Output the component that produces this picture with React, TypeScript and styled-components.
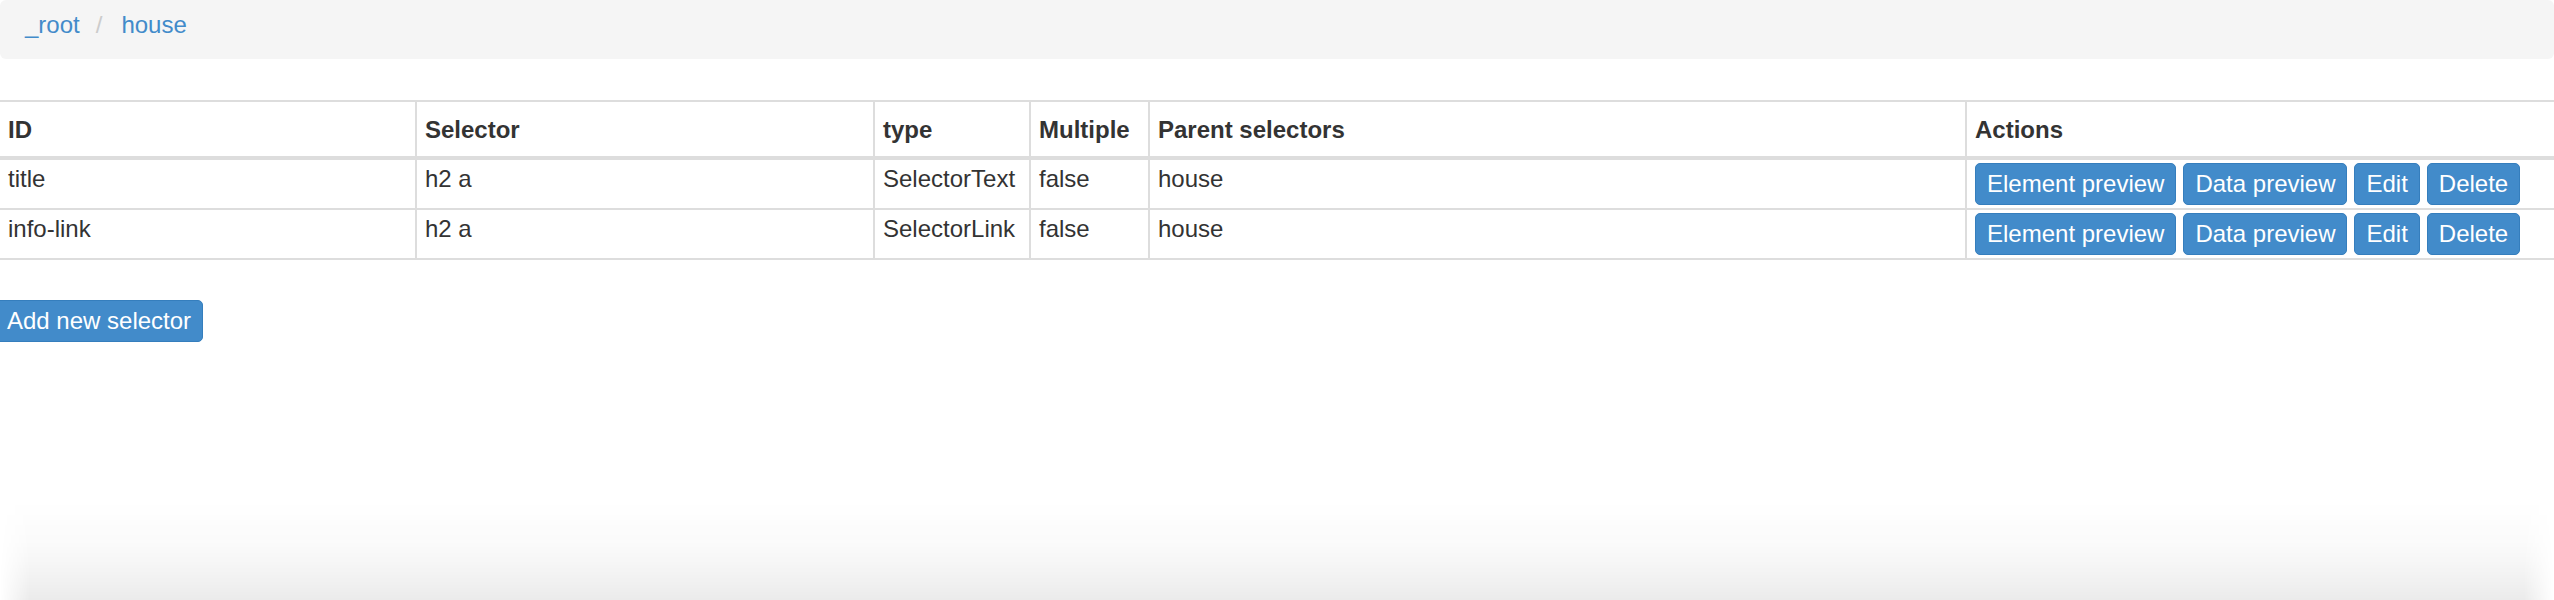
import React from "react";
import styled, { createGlobalStyle } from "styled-components";

const GlobalStyle = createGlobalStyle`
  html, body {
    margin: 0;
    padding: 0;
    background: #ffffff;
  }
  body {
    font-family: "Liberation Sans", Arial, Helvetica, sans-serif;
    font-size: 24px;
    line-height: 32px;
    color: #333333;
  }
  * { box-sizing: border-box; }
`;

const Page = styled.div`
  display: flex;
  flex-direction: column;
  height: 600px;
  overflow: hidden;
`;

const Breadcrumb = styled.ol`
  display: flex;
  align-items: baseline;
  list-style: none;
  margin: 0 0 41px;
  padding: 9px 25px 18px;
  height: 59px;
  background: #f5f5f5;
  border-radius: 6px;
  flex-shrink: 0;
`;

const Crumb = styled.li`
  display: flex;
  align-items: baseline;
`;

const CrumbLink = styled.a`
  color: #428bca;
  text-decoration: none;
`;

const Separator = styled.span`
  color: #cccccc;
  padding: 0 19px 0 16px;
`;

const Table = styled.table`
  width: 100%;
  table-layout: fixed;
  border-collapse: separate;
  border-spacing: 0;
  border-top: 2px solid #dddddd;
  margin: 0 0 40px;
  flex-shrink: 0;
`;

const HeadCell = styled.th<{ $w: number; $first?: boolean }>`
  width: ${(p) => p.$w}px;
  padding: 12px 8px 10px;
  text-align: left;
  vertical-align: top;
  font-weight: bold;
  line-height: 32px;
  border-bottom: 4px solid #dddddd;
  border-left: ${(p) => (p.$first ? "0" : "2px solid #dddddd")};
  white-space: nowrap;
  overflow: hidden;
`;

const Cell = styled.td<{ $first?: boolean }>`
  padding: 3px 8px;
  text-align: left;
  vertical-align: top;
  line-height: 32px;
  border-bottom: 2px solid #dddddd;
  border-left: ${(p) => (p.$first ? "0" : "2px solid #dddddd")};
  white-space: nowrap;
  overflow: hidden;
`;

const ButtonGroup = styled.div`
  display: flex;
  gap: 7px;
`;

const Button = styled.button<{ $bleed?: boolean }>`
  display: inline-flex;
  align-items: center;
  height: 42px;
  padding: 0 11px;
  margin-left: ${(p) => (p.$bleed ? "-5px" : "0")};
  border: 1px solid #357ebd;
  border-radius: 5px;
  background: #428bca;
  color: #ffffff;
  font-family: "Liberation Sans", Arial, Helvetica, sans-serif;
  font-size: 24px;
  line-height: normal;
  white-space: nowrap;
  cursor: pointer;
`;

const Footer = styled.div`
  display: flex;
  flex-shrink: 0;
`;

const Shade = styled.div`
  margin-top: auto;
  height: 100px;
  flex-shrink: 0;
  background: linear-gradient(
    to bottom,
    rgba(0, 0, 0, 0) 0%,
    rgba(0, 0, 0, 0.008) 20%,
    rgba(0, 0, 0, 0.017) 40%,
    rgba(0, 0, 0, 0.032) 60%,
    rgba(0, 0, 0, 0.054) 80%,
    rgba(0, 0, 0, 0.08) 100%
  );
  -webkit-mask-image: linear-gradient(
    to right,
    transparent 0,
    #000 30px,
    #000 calc(100% - 30px),
    transparent 100%
  );
  mask-image: linear-gradient(
    to right,
    transparent 0,
    #000 30px,
    #000 calc(100% - 30px),
    transparent 100%
  );
`;

const columns = [
  { title: "ID", w: 415 },
  { title: "Selector", w: 458 },
  { title: "type", w: 156 },
  { title: "Multiple", w: 119 },
  { title: "Parent selectors", w: 817 },
  { title: "Actions", w: 589 },
];

const rows = [
  { id: "title", selector: "h2 a", type: "SelectorText", multiple: "false", parents: "house" },
  { id: "info-link", selector: "h2 a", type: "SelectorLink", multiple: "false", parents: "house" },
];

export default function App() {
  return (
    <>
      <GlobalStyle />
      <Page>
        <Breadcrumb>
          <Crumb>
            <CrumbLink href="#">_root</CrumbLink>
          </Crumb>
          <Crumb>
            <Separator>/</Separator>
            <CrumbLink href="#">house</CrumbLink>
          </Crumb>
        </Breadcrumb>

        <Table>
          <thead>
            <tr>
              {columns.map((c, i) => (
                <HeadCell key={c.title} $w={c.w} $first={i === 0}>
                  {c.title}
                </HeadCell>
              ))}
            </tr>
          </thead>
          <tbody>
            {rows.map((r) => (
              <tr key={r.id}>
                <Cell $first>{r.id}</Cell>
                <Cell>{r.selector}</Cell>
                <Cell>{r.type}</Cell>
                <Cell>{r.multiple}</Cell>
                <Cell>{r.parents}</Cell>
                <Cell>
                  <ButtonGroup>
                    <Button>Element preview</Button>
                    <Button>Data preview</Button>
                    <Button>Edit</Button>
                    <Button>Delete</Button>
                  </ButtonGroup>
                </Cell>
              </tr>
            ))}
          </tbody>
        </Table>

        <Footer>
          <Button $bleed>Add new selector</Button>
        </Footer>

        <Shade />
      </Page>
    </>
  );
}
